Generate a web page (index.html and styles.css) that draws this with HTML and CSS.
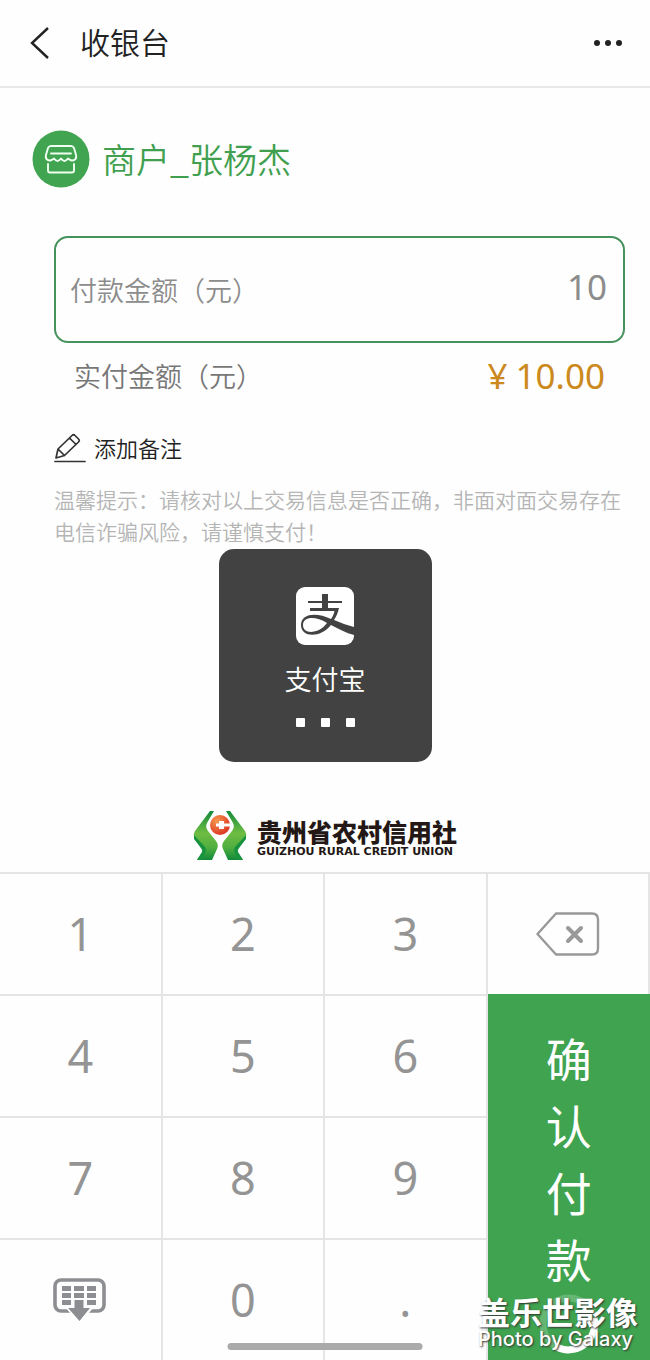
FILE: index.html
```
<!DOCTYPE html>
<html lang="zh-CN">
<head>
<meta charset="utf-8">
<meta name="viewport" content="width=device-width, initial-scale=1">
<title>收银台</title>
<link rel="stylesheet" href="styles.css">
</head>
<body>
<div class="page">
  <header class="topbar">
    <button class="icon-button" type="button" aria-label="返回">
      <svg width="20" height="32" viewBox="0 0 20 32" fill="none" stroke="#222" stroke-width="2.4"><path d="M18 1 2 16 18 31"/></svg>
    </button>
    <h1 class="topbar-title">收银台</h1>
    <button class="icon-button" type="button" aria-label="更多">
      <svg width="30" height="8" viewBox="0 0 30 8" fill="#222"><circle cx="4" cy="4" r="3"/><circle cx="15" cy="4" r="3"/><circle cx="26" cy="4" r="3"/></svg>
    </button>
  </header>

  <main class="content">
    <section class="merchant">
      <svg class="merchant-icon" width="58" height="58" viewBox="0 0 58 58">
        <circle cx="29" cy="29" r="28.5" fill="#41a451"/>
        <g fill="none" stroke="#effff0" stroke-width="1.9" stroke-linejoin="round" stroke-linecap="round">
          <path d="M19 16h20q2 0 3 2l2 7q.8 3-1 4.500-3 2-5.500 0l-1.500-1q-3.500 5-7 0-3.500 5-7 0l-1.500 1q-3 2-5.500 0-1.800-1.500-1-4.500l2-7q1-2 3-2z"/>
          <path d="M19 23.500h20M16 34v6.500q0 2 2 2h22q2 0 2-2V34"/>
        </g>
      </svg>
      <h2 class="merchant-name">商户_张杨杰</h2>
    </section>

    <section class="payment">
      <div class="amount-box">
        <label class="amount-label" for="amount">付款金额（元）</label>
        <input class="amount-input" id="amount" type="text" inputmode="none" value="10">
      </div>
      <div class="actual">
        <span class="actual-label">实付金额（元）</span>
        <span class="actual-value"><span>¥</span><span>10.00</span></span>
      </div>
      <button class="remark" type="button">
        <svg width="32" height="30" viewBox="0 0 32 30" fill="none" stroke="#333" stroke-width="1.7" stroke-linejoin="round" stroke-linecap="round">
          <path d="M2 25 4 16 18 2.500q1.500-1.500 3 0l3.500 3.500q1.500 1.500 0 3L10.500 22.500zM15.500 5l6.500 6.500M4 16l6.500 6.500M1 28.500h30"/>
        </svg>
        添加备注
      </button>
      <p class="notice">温馨提示：请核对以上交易信息是否正确，非面对面交易存在电信诈骗风险，请谨慎支付！</p>
    </section>

    <div class="toast" role="status">
      <svg width="58" height="58" viewBox="0 0 58 58">
        <rect width="58" height="58" rx="9" fill="#fff"/>
        <path d="M26 7h6v7h14v2H32v5h11c-1 5-3 9-5 12 7 3 13 5 20 7v8c-8-2-15-6-23-10C25 51 5 51 5 38c0-12 16-13 30-6 2-3 3-5 3.500-8H14v-3h12v-5H12v-2h14zM31 36C20 29 7 29 7 38c0 10 16 9 24-2z" fill="#424242"/>
      </svg>
      <span class="toast-title">支付宝</span>
      <span class="toast-dots"><i class="dot"></i><i class="dot"></i><i class="dot"></i></span>
    </div>

    <div class="brand">
      <svg width="54" height="50" viewBox="0 0 54 50">
        <defs>
          <linearGradient id="leaf" x1="0" y1="0" x2="0" y2="1"><stop offset="0" stop-color="#128a3a"/><stop offset=".45" stop-color="#6fbd42"/><stop offset=".75" stop-color="#4fae40"/><stop offset="1" stop-color="#128a3a"/></linearGradient>
          <radialGradient id="coin" cx=".35" cy=".3" r=".8"><stop offset="0" stop-color="#f79a50"/><stop offset="1" stop-color="#d92c1c"/></radialGradient>
        </defs>
        <g id="figure">
          <path d="M17 0h4l-7 12q-2 4 1 8l8 10q3 4 1 8l-5 11H4l6-9L1 26q-1-3 1-6z" fill="url(#leaf)"/>
          <path d="M1 24 12 36q2 3 0 6l-4 7H4l5-8q1-2-1-4L1 28z" fill="#17933e"/>
        </g>
        <use href="#figure" transform="matrix(-1 0 0 1 54 0)"/>
        <circle cx="27" cy="14" r="10" fill="url(#coin)"/>
        <path d="M23 12.500h3V10h5v2.500h6v3h-6V18h-5v-2.500h-3z" fill="#fff"/>
      </svg>
      <div class="brand-text">
        <span class="brand-cn">贵州省农村信用社</span>
        <span class="brand-en">GUIZHOU RURAL CREDIT UNION</span>
      </div>
    </div>
  </main>

  <section class="keypad" aria-label="数字键盘">
    <button class="key" type="button">1</button>
    <button class="key" type="button">2</button>
    <button class="key" type="button">3</button>
    <button class="key key-icon" type="button" aria-label="删除">
      <svg width="64" height="44" viewBox="0 0 64 44" fill="none" stroke="#999" stroke-width="2.4" stroke-linejoin="round"><path d="M20 1.500h36q6 0 6 6v29q0 6-6 6H20L1.500 22z"/><path d="m32 16 13 13m0-13L32 29" stroke-width="4" stroke-linecap="round"/></svg>
    </button>
    <button class="key" type="button">4</button>
    <button class="key" type="button">5</button>
    <button class="key" type="button">6</button>
    <button class="confirm" type="button">
      <span class="confirm-text">确认付款</span>
      <svg class="spinner" width="60" height="60" viewBox="0 0 60 60" fill="none" stroke-width="7"><circle cx="30" cy="30" r="26" stroke="#66b674"/><path d="M55 24A26 26 0 0 1 16 52" stroke="#fff"/></svg>
    </button>
    <button class="key" type="button">7</button>
    <button class="key" type="button">8</button>
    <button class="key" type="button">9</button>
    <button class="key key-icon" type="button" aria-label="收起键盘">
      <svg width="54" height="44" viewBox="0 0 54 44">
        <rect x="2" y="2" width="49" height="31" rx="6" fill="none" stroke="#8c8e91" stroke-width="3.6"/>
        <path d="M9 8h9v5H9zm12 0h10v5H21zm13 0h9v5h-9zM9 15h9v5H9zm12 0h10v5H21zm13 0h9v5h-9zM9 22h9v5H9zm25 0h9v5h-9z" fill="#8c8e91"/>
        <path d="M12 29h29L26.500 46z" fill="#fff"/>
        <path d="M21.500 22h9v8H37L26.500 43 15 30h6.500z" fill="#8c8e91"/>
      </svg>
    </button>
    <button class="key" type="button">0</button>
    <button class="key" type="button">.</button>
    <span class="home-bar"></span>
    <div class="watermark">
      <span class="watermark-cn">盖乐世影像</span>
      <span class="watermark-en">Photo by Galaxy</span>
    </div>
  </section>
</div>
</body>
</html>
```
FILE: styles.css
```
* {
  box-sizing: border-box;
}

body {
  margin: 0;
  background: #fefefe;
  color: #222;
  font-family: "Noto Sans", "Noto Sans CJK SC", sans-serif;
  font-weight: 350;
}

button,
input {
  margin: 0;
  padding: 0;
  border: 0;
  background: none;
  color: inherit;
  font: inherit;
}

h1,
h2,
p {
  margin: 0;
  font-weight: inherit;
}

svg {
  display: block;
  flex: none;
}

.page {
  display: flex;
  flex-direction: column;
  min-height: 100vh;
}

.topbar {
  display: flex;
  align-items: center;
  height: 88px;
  padding: 0 27px 0 30px;
  border-bottom: 2px solid #e8e8e8;
}

.topbar-title {
  flex: 1;
  padding-left: 30px;
  font-size: 30px;
  line-height: 40px;
}

.content {
  display: flex;
  flex: 1;
  flex-direction: column;
  padding: 42px 0 11px;
}

.merchant {
  display: flex;
  align-items: center;
  gap: 12px;
  padding: 0 32px;
}

.merchant-name {
  color: #41a050;
  font-family: "Noto Sans CJK SC", sans-serif;
  font-size: 34px;
  line-height: 48px;
}

.payment {
  display: flex;
  flex-direction: column;
  padding: 48px 25px 0 54px;
}

.amount-box {
  display: flex;
  align-items: center;
  height: 107px;
  padding: 0 16px 0 14px;
  border: 2px solid #46925c;
  border-radius: 14px;
  color: #8c8c8c;
}

.amount-label {
  flex: none;
  font-size: 27px;
}

.amount-input {
  flex: 1;
  min-width: 0;
  padding-bottom: 6px;
  outline: none;
  font-size: 35px;
  font-weight: 400;
  text-align: right;
}

.actual {
  display: flex;
  align-items: center;
  justify-content: space-between;
  height: 64px;
  padding: 0 20px;
  color: #777;
  font-size: 27px;
}

.actual-value {
  display: flex;
  gap: 8px;
  color: #cc8a1e;
  font-size: 35px;
  font-weight: 400;
}

.remark {
  display: flex;
  align-items: center;
  align-self: flex-start;
  gap: 8px;
  margin-top: 25px;
  font-size: 22px;
  line-height: 32px;
}

.notice {
  margin-top: 20px;
  color: #b5b5b5;
  font-size: 21px;
  line-height: 32px;
}

.toast {
  display: flex;
  flex-direction: column;
  align-items: center;
  align-self: center;
  width: 213px;
  height: 213px;
  margin-top: 1px;
  padding-top: 38px;
  border-radius: 15px;
  background: #424242;
  color: #fff;
}

.toast-title {
  margin-top: 15px;
  font-size: 27px;
  line-height: 40px;
}

.toast-dots {
  display: flex;
  gap: 16px;
  margin-top: 18px;
}

.dot {
  width: 9px;
  height: 9px;
  border-radius: 1px;
  background: #fff;
}

.brand {
  display: flex;
  align-items: center;
  align-self: center;
  gap: 10px;
  margin-top: auto;
}

.brand-text {
  display: flex;
  flex-direction: column;
  padding-top: 6px;
  color: #231815;
}

.brand-cn {
  font-size: 25px;
  font-weight: 900;
  line-height: 26px;
}

.brand-en {
  font-family: "DejaVu Sans", sans-serif;
  font-size: 11px;
  font-weight: 700;
  line-height: 14px;
}

.keypad {
  position: relative;
  display: grid;
  grid-template-columns: repeat(4, 1fr);
  grid-template-rows: repeat(4, 122px);
}

.key {
  display: flex;
  align-items: center;
  justify-content: center;
  padding-bottom: 2px;
  border: solid #e5e5e5;
  border-width: 2px 2px 0 0;
  color: #949494;
  font-size: 45px;
  font-weight: 400;
}

.key-icon {
  padding-bottom: 0;
}

.confirm {
  display: flex;
  grid-row: 2 / 5;
  grid-column: 4;
  flex-direction: column;
  align-items: center;
  padding-top: 32px;
  background: #3fa34f;
  color: #fff;
}

.confirm-text {
  width: 46px;
  font-size: 46px;
  font-weight: 400;
  line-height: 67px;
}

.home-bar {
  position: absolute;
  bottom: 10px;
  left: 50%;
  width: 30%;
  height: 7px;
  border-radius: 4px;
  background: #aaa;
  transform: translateX(-50%);
}

.watermark {
  position: absolute;
  right: 12px;
  bottom: 11px;
  display: flex;
  flex-direction: column;
  color: #fff;
  text-shadow: 1px 1px 2px #333;
}

.watermark-cn {
  font-size: 32px;
  font-weight: 700;
  line-height: 32px;
}

.watermark-en {
  font-family: Inter, sans-serif;
  font-size: 20px;
  font-weight: 500;
  line-height: 20px;
}
```
